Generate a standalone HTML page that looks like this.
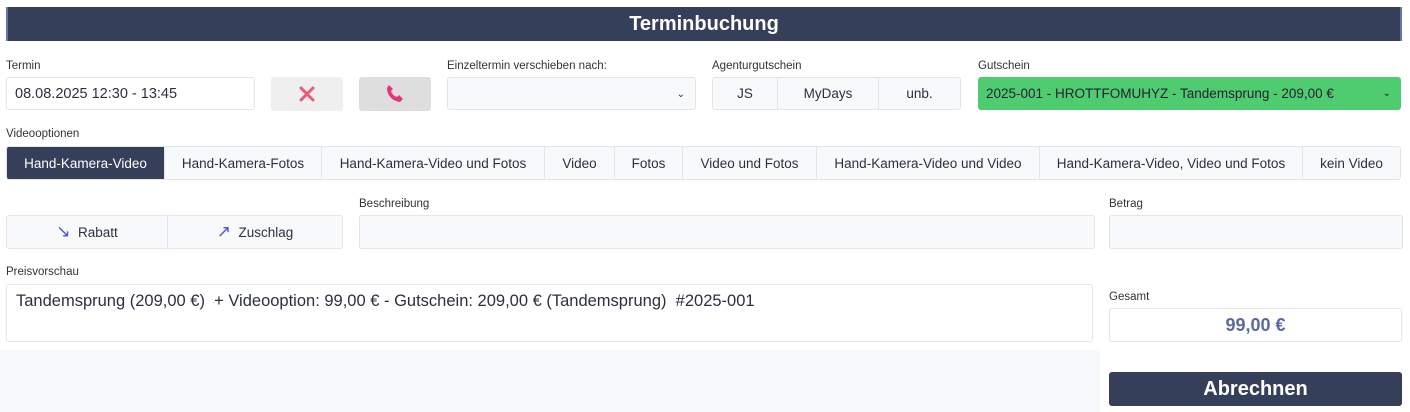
<!DOCTYPE html>
<html><head><meta charset="utf-8"><style>
*{box-sizing:border-box;margin:0;padding:0}
body{width:1410px;height:412px;background:#fff;font-family:"Liberation Sans","DejaVu Sans",sans-serif;color:#2b3040;position:relative;overflow:hidden}
.a{position:absolute}
.lbl{position:absolute;font-size:11.5px;color:#333}
.box{position:absolute;border:1px solid #e2e5ea;border-radius:3px;background:#f8f9fb}
.hdr{left:6px;top:7px;width:1396px;height:34px;background:#363f5a;border-left:2px solid #6576a8;border-right:2px solid #6576a8;color:#fff;font-weight:bold;font-size:20px;text-align:center;line-height:34px}
.tabs{left:6px;top:146px;width:1395px;height:34px;display:flex;border:1px solid #e2e5ea;border-radius:3px;background:#f8f9fb;overflow:hidden}
.tabs div{height:100%;display:flex;align-items:center;justify-content:center;font-size:13.5px;border-right:1px solid #e2e5ea;color:#2b3040}
.tabs div:last-child{border-right:none}
.tabs .on{background:#363f5a;color:#fff}
.chev{position:absolute;right:10px;top:11px;font-size:10px}
</style></head><body>
<div class="a hdr">Terminbuchung</div>

<div class="lbl" style="left:6px;top:60px">Termin</div>
<div class="box" style="left:6px;top:77px;width:249px;height:33px;background:#fff;font-size:14.5px;padding:8px 0 0 8px">08.08.2025 12:30 - 13:45</div>
<div class="a" style="left:271px;top:77px;width:72px;height:34px;background:#efefef;border-radius:3px">
<svg width="72" height="34"><path d="M30 11 L42 23 M42 11 L30 23" stroke="#f0557a" stroke-width="3" stroke-linecap="round"/></svg></div>
<div class="a" style="left:359px;top:77px;width:72px;height:34px;background:#dedede;border-radius:3px">
<svg width="72" height="34"><path d="M28 11 C28 18 33 24 41 25 L44 22 L40 18 L38 20 C35 19 33 17 32 14 L34 12 L30 8 Z" fill="#e6337a"/></svg></div>

<div class="lbl" style="left:447px;top:60px">Einzeltermin verschieben nach:</div>
<div class="box" style="left:447px;top:77px;width:249px;height:33px"><span class="chev">&#8964;</span></div>

<div class="lbl" style="left:712px;top:60px">Agenturgutschein</div>
<div class="box" style="left:712px;top:77px;width:249px;height:33px;display:flex;font-size:13.5px">
<div style="width:65px;border-right:1px solid #e2e5ea;text-align:center;line-height:31px">JS</div>
<div style="width:101px;border-right:1px solid #e2e5ea;text-align:center;line-height:31px">MyDays</div>
<div style="flex:1;text-align:center;line-height:31px">unb.</div></div>

<div class="lbl" style="left:978px;top:60px">Gutschein</div>
<div class="a" style="left:978px;top:77px;width:423px;height:33px;background:#50cc70;border-radius:3px;font-size:13.5px;padding:9px 0 0 8px;color:#223">2025-001 - HROTTFOMUHYZ - Tandemsprung - 209,00 €<span class="chev">&#8964;</span></div>

<div class="lbl" style="left:6px;top:128px">Videooptionen</div>
<div class="a tabs">
<div class="on" style="width:158px">Hand-Kamera-Video</div>
<div style="width:157px">Hand-Kamera-Fotos</div>
<div style="width:223px">Hand-Kamera-Video und Fotos</div>
<div style="width:70px">Video</div>
<div style="width:68px">Fotos</div>
<div style="width:134px">Video und Fotos</div>
<div style="width:223px">Hand-Kamera-Video und Video</div>
<div style="width:263px">Hand-Kamera-Video, Video und Fotos</div>
<div style="flex:1">kein Video</div>
</div>

<div class="box" style="left:6px;top:215px;width:337px;height:34px;display:flex;font-size:13.5px">
<div style="width:161px;border-right:1px solid #e2e5ea;text-align:center;line-height:32px"><span style="color:#4a5bbf;font-size:17px">&#8600;</span>&nbsp; Rabatt</div>
<div style="flex:1;text-align:center;line-height:32px"><span style="color:#4a5bbf;font-size:17px">&#8599;</span>&nbsp; Zuschlag</div></div>
<div class="lbl" style="left:359px;top:198px">Beschreibung</div>
<div class="box" style="left:359px;top:215px;width:736px;height:34px"></div>
<div class="lbl" style="left:1109px;top:198px">Betrag</div>
<div class="box" style="left:1109px;top:215px;width:294px;height:34px"></div>

<div class="lbl" style="left:6px;top:266px">Preisvorschau</div>
<div class="box" style="left:6px;top:284px;width:1087px;height:58px;background:#fff;font-size:16.5px;padding:7px 0 0 9px;white-space:pre">Tandemsprung (209,00 €)  + Videooption: 99,00 € - Gutschein: 209,00 € (Tandemsprung)  #2025-001</div>
<div class="a" style="left:0;top:350px;width:1100px;height:62px;background:#f8f9fb;border-radius:0 4px 0 0"></div>

<div class="lbl" style="left:1109px;top:291px">Gesamt</div>
<div class="box" style="left:1109px;top:308px;width:293px;height:34px;background:#fff;text-align:center;font-weight:bold;font-size:18px;color:#5a6a9c;line-height:32px">99,00 €</div>
<div class="a" style="left:1109px;top:372px;width:293px;height:34px;background:#363f5a;border-radius:3px;color:#fff;font-weight:bold;font-size:20px;text-align:center;line-height:34px">Abrechnen</div>
</body></html>
